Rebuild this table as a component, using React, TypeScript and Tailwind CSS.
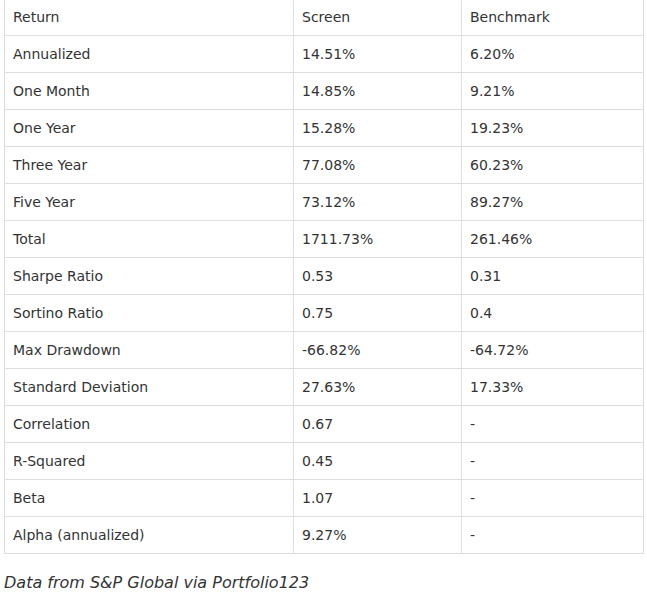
import React from 'react';

const rows: [string, string, string][] = [
  ['Annualized', '14.51%', '6.20%'],
  ['One Month', '14.85%', '9.21%'],
  ['One Year', '15.28%', '19.23%'],
  ['Three Year', '77.08%', '60.23%'],
  ['Five Year', '73.12%', '89.27%'],
  ['Total', '1711.73%', '261.46%'],
  ['Sharpe Ratio', '0.53', '0.31'],
  ['Sortino Ratio', '0.75', '0.4'],
  ['Max Drawdown', '-66.82%', '-64.72%'],
  ['Standard Deviation', '27.63%', '17.33%'],
  ['Correlation', '0.67', '-'],
  ['R-Squared', '0.45', '-'],
  ['Beta', '1.07', '-'],
  ['Alpha (annualized)', '9.27%', '-'],
];

const cell = 'h-[37px] border border-[#dddddd] px-2 py-0 text-left align-middle font-normal';

export default function App() {
  return (
    <div className="bg-white px-1 text-[14px] text-[#333333]" style={{ fontFamily: '"DejaVu Sans", Verdana, sans-serif' }}>
      <table className="mt-[-2px] w-[639px] table-fixed border-collapse">
        <colgroup>
          <col className="w-[289px]" />
          <col className="w-[168px]" />
          <col className="w-[182px]" />
        </colgroup>
        <thead>
          <tr>
            <th className={cell}>Return</th>
            <th className={cell}>Screen</th>
            <th className={cell}>Benchmark</th>
          </tr>
        </thead>
        <tbody>
          {rows.map(([label, screen, bench]) => (
            <tr key={label}>
              <td className={cell}>{label}</td>
              <td className={cell}>{screen}</td>
              <td className={cell}>{bench}</td>
            </tr>
          ))}
        </tbody>
      </table>
      <p className="mt-[17px] text-[16px] italic">Data from S&amp;P Global via Portfolio123</p>
    </div>
  );
}
